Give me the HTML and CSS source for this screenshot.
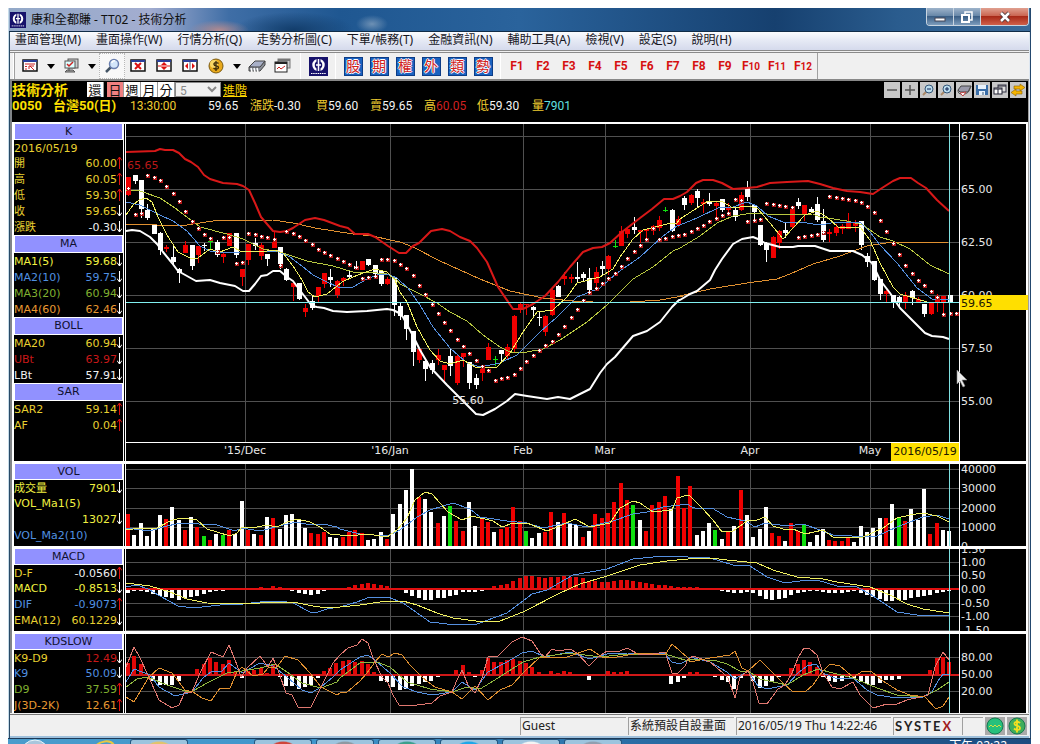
FILE: index.html
```html
<!DOCTYPE html>
<html lang="zh-Hant">
<head>
    <meta charset="UTF-8">
    <meta name="viewport" content="width=device-width, initial-scale=1.0">
    <title>康和全都賺 - TT02 - 技術分析</title>
    <link rel="stylesheet" href="styles.css">
</head>
<body>
    <!-- shared symbols -->
    <svg class="defs" width="0" height="0">
        <symbol id="up" viewBox="0 0 5 13"><path d="M2.5 13V1M0 4.5L2.5 1L5 4.5" fill="none" stroke="#e01010"/></symbol>
        <symbol id="down" viewBox="0 0 5 13"><path d="M2.5 1V12M0 8.5L2.5 12L5 8.5" fill="none" stroke="#fff"/></symbol>
        <symbol id="logo" viewBox="0 0 19 19">
            <rect width="19" height="19" fill="#17126b"/>
            <circle cx="9.500" cy="8" r="5" fill="none" stroke="#fff" stroke-width="2.500"/>
            <path d="M9.500 1V5M9.500 11V15" stroke="#17126b" stroke-width="4"/>
            <path d="M9.500 2V14M7 8h5" stroke="#fff" stroke-width="1.500"/>
            <path d="M2 16.500h15" stroke="#fff" stroke-dasharray="1.500 .7"/>
        </symbol>
        <symbol id="drop" viewBox="0 0 8 5"><path d="M0 0h8L4 5z"/></symbol>
    </svg>

    <div class="window">
        <div class="titlebar">
            <svg class="app_icon"><use href="#logo"/></svg>
            <h1>康和全都賺 - TT02 - 技術分析</h1>
            <div class="win_buttons">
                <button aria-label="最小化"><svg width="14" height="14"><rect x="2" y="8" width="10" height="3" fill="#fff" stroke="#445"/></svg></button>
                <button aria-label="還原"><svg width="14" height="14"><path d="M5 4V2h7v8h-2" fill="none" stroke="#fff" stroke-width="1.500"/><rect x="2" y="5" width="7" height="7" fill="none" stroke="#fff" stroke-width="2"/></svg></button>
                <button class="close" aria-label="關閉"><svg width="14" height="14"><path d="M3 3l8 8M11 3l-8 8" stroke="#433" stroke-width="4"/><path d="M3 3l8 8M11 3l-8 8" stroke="#fff" stroke-width="2.500"/></svg></button>
            </div>
        </div>

        <div class="client">
            <nav class="menubar">
                <button>畫面管理(M)</button>
                <button>畫面操作(W)</button>
                <button>行情分析(Q)</button>
                <button>走勢分析圖(C)</button>
                <button>下單/帳務(T)</button>
                <button>金融資訊(N)</button>
                <button>輔助工具(A)</button>
                <button>檢視(V)</button>
                <button>設定(S)</button>
                <button>說明(H)</button>
            </nav>

            <div class="toolbar">
                <div class="group">
                    <button aria-label="版面"><svg width="16" height="14"><rect x="1" y="1" width="14" height="11" fill="#fff" stroke="#111" stroke-width="1.500"/><path d="M1 2h14" stroke="#2a3f9a" stroke-width="2"/><path d="M3 5h10M3 7.500h2M3 10h2M7 10V7h5M8 7l4 4" stroke="#c22" fill="none"/></svg></button>
                    <button class="drop" aria-label="版面選單"><svg width="8" height="5"><use href="#drop"/></svg></button>
                    <button aria-label="主機"><svg width="16" height="16"><rect x="5" y="1" width="10" height="9" fill="#ccc" stroke="#555"/><rect x="2" y="3" width="10" height="7" fill="#dff" stroke="#555"/><path d="M4 6l2 2 4-4" fill="none" stroke="#c22" stroke-width="1.500"/><path d="M6 10v3M2 14h10l-2-2H4z" stroke="#555" fill="#aaa"/></svg></button>
                    <button class="drop" aria-label="主機選單"><svg width="8" height="5"><use href="#drop"/></svg></button>
                    <button class="on" aria-label="放大鏡"><svg width="16" height="16"><path d="M2 14l5-5" stroke="#456" stroke-width="2.500"/><circle cx="10" cy="6" r="4.500" fill="#d4e6fa" stroke="#6a7fb0" stroke-width="1.500"/><path d="M8 5a2 2 0 0 1 3-2" fill="none" stroke="#fff" stroke-width="1.500"/></svg></button>
                    <button aria-label="關閉視窗"><svg width="16" height="14"><rect x="1" y="1" width="14" height="11" fill="#fff" stroke="#111" stroke-width="1.500"/><path d="M1 2h14" stroke="#2a3f9a" stroke-width="2"/><path d="M5 4l6 6M11 4l-6 6" stroke="#d11" stroke-width="2"/></svg></button>
                    <button aria-label="上下排列"><svg width="16" height="14"><rect x="1" y="1" width="14" height="11" fill="#fff" stroke="#111" stroke-width="1.500"/><path d="M1 2h14" stroke="#2a3f9a" stroke-width="2"/><path d="M2 7h12" stroke="#d11"/><path d="M8 3l3 3H5zM8 11l3-3H5z" fill="#d11"/></svg></button>
                    <button aria-label="左右排列"><svg width="16" height="14"><rect x="1" y="1" width="14" height="11" fill="#fff" stroke="#111" stroke-width="1.500"/><path d="M1 2h14" stroke="#2a3f9a" stroke-width="2"/><path d="M8 3v9" stroke="#556"/><path d="M3 7l3-3v6zM13 7l-3-3v6z" fill="#d11"/></svg></button>
                    <button aria-label="帳務"><svg width="16" height="16"><circle cx="8" cy="8" r="7" fill="#e8a91c" stroke="#7b5a10"/><circle cx="6" cy="6" r="4" fill="#f8d766"/><path d="M10.500 5.500C9 4 5.500 4.500 6 6.500s4.500 1 4.500 3-3.500 2-5 .5M8 3v10" fill="none" stroke="#3b2a08" stroke-width="1.300"/></svg></button>
                    <button class="drop" aria-label="帳務選單"><svg width="8" height="5"><use href="#drop"/></svg></button>
                    <button aria-label="列印"><svg width="18" height="16"><path d="M1 9l6-6h10l-5 7z" fill="#a8b0c8" stroke="#444"/><path d="M1 9h11l5-6v4l-5 6H1z" fill="#8a8f98" stroke="#444"/><path d="M3 10l1 4M6 10l1 4M9 10l1 4" stroke="#fff" stroke-width="1.500"/></svg></button>
                    <button aria-label="走勢圖"><svg width="18" height="16"><rect x="4" y="1" width="12" height="9" fill="#ccc" stroke="#777"/><path d="M4 2h12" stroke="#777" stroke-width="2"/><rect x="1" y="4" width="12" height="10" fill="#fff" stroke="#222"/><path d="M1 5h12" stroke="#222" stroke-width="2"/><path d="M3 11l2-2 2 2 4-3" fill="none" stroke="#c22"/></svg></button>
                </div>
                <div class="group">
                    <button aria-label="康和"><svg width="19" height="19"><use href="#logo"/></svg></button>
                </div>
                <div class="group">
                    <button class="word"><span>股</span></button>
                    <button class="word"><span>期</span></button>
                    <button class="word"><span>權</span></button>
                    <button class="word"><span>外</span></button>
                    <button class="word"><span>類</span></button>
                    <button class="word"><span>勢</span></button>
                </div>
                <div class="group">
                    <button class="fkey">F1</button>
                    <button class="fkey">F2</button>
                    <button class="fkey">F3</button>
                    <button class="fkey">F4</button>
                    <button class="fkey">F5</button>
                    <button class="fkey">F6</button>
                    <button class="fkey">F7</button>
                    <button class="fkey">F8</button>
                    <button class="fkey">F9</button>
                    <button class="fkey">F<small>10</small></button>
                    <button class="fkey">F<small>11</small></button>
                    <button class="fkey">F<small>12</small></button>
                </div>
            </div>

            <div class="workspace">
                <div class="head">
                    <div class="controls">
                        <h2>技術分析</h2>
                        <button class="period reset">還</button>
                        <button class="period on">日</button>
                        <button class="period">週</button>
                        <button class="period">月</button>
                        <button class="period">分</button>
                        <select aria-label="分鐘" disabled><option>5</option></select>
                        <a href="javascript:;">進階</a>
                        <div class="tools">
                            <button aria-label="減少"><svg width="16" height="16"><path d="M3 8h10" stroke="#555" stroke-width="1.500"/></svg></button>
                            <button aria-label="增加"><svg width="16" height="16"><path d="M3 8h10M8 3v10" stroke="#555" stroke-width="1.500"/></svg></button>
                            <button aria-label="縮小"><svg width="16" height="16"><path d="M3 13l4-4" stroke="#a86" stroke-width="2"/><circle cx="9" cy="7" r="4" fill="#bde" stroke="#357"/><path d="M7 7h4" stroke="#125"/></svg></button>
                            <button aria-label="放大"><svg width="16" height="16"><path d="M3 13l4-4" stroke="#a86" stroke-width="2"/><circle cx="9" cy="7" r="4" fill="#bde" stroke="#357"/><path d="M7 7h4M9 5v4" stroke="#125"/></svg></button>
                            <button aria-label="列印"><svg width="16" height="16"><path d="M2 8l3-4h10l-3 6H4z" fill="#99a" stroke="#444"/><path d="M2 8c0 3 1 4 4 4s5 0 7-3l2-5" fill="none" stroke="#555"/><path d="M4 11l3 3 3-4z" fill="#fff" stroke="#b44"/></svg></button>
                            <button aria-label="儲存"><svg width="16" height="16"><path d="M2 3h12v10H2z" fill="#3a6ea8"/><path d="M4 3h8v4H4zM5 9h6v4H5z" fill="#e8f2fc"/><path d="M9 10v3" stroke="#357"/></svg></button>
                            <button aria-label="視窗"><svg width="16" height="16"><rect x="6" y="3" width="8" height="7" fill="#ddd" stroke="#334"/><rect x="2" y="6" width="8" height="6" fill="#fff" stroke="#223"/><path d="M2 7h8M6 7v5M6 4h8" stroke="#223"/></svg></button>
                            <button aria-label="切換"><svg width="16" height="16"><path d="M4 4h6V2l5 3.500L10 9V7H4zM12 9H6V7l-5 3.500L6 14v-2h6z" fill="#f5b400" stroke="#8a6000" stroke-width=".6"/></svg></button>
                        </div>
                    </div>
                    <div class="quote">
                        <b>0050</b>
                        <b>台灣50(日)</b>
                        <span class="time">13:30:00</span>
                        <span>59.65</span>
                        <span><i>漲跌</i>-0.30</span>
                        <span><i>買</i>59.60</span>
                        <span><i>賣</i>59.65</span>
                        <span class="red"><i>高</i>60.05</span>
                        <span><i>低</i>59.30</span>
                        <span class="cyan"><i>量</i>7901</span>
                    </div>
                </div>

                <div class="panel price">
                    <div class="legend">
                        <h3>K</h3>
                        <p class="gold"><span>2016/05/19</span></p>
                        <p class="gold"><span>開</span><em>60.00</em><svg><use href="#up"/></svg></p>
                        <p class="gold"><span>高</span><em>60.05</em><svg><use href="#up"/></svg></p>
                        <p class="gold"><span>低</span><em>59.30</em><svg><use href="#up"/></svg></p>
                        <p class="gold"><span>收</span><em>59.65</em><svg><use href="#down"/></svg></p>
                        <p class="gold"><span>漲跌</span><em class="white">-0.30</em><svg><use href="#down"/></svg></p>
                        <h3>MA</h3>
                        <p class="yellow"><span>MA1(5)</span><em>59.68</em><svg><use href="#down"/></svg></p>
                        <p class="blue"><span>MA2(10)</span><em>59.75</em><svg><use href="#down"/></svg></p>
                        <p class="green"><span>MA3(20)</span><em>60.94</em><svg><use href="#down"/></svg></p>
                        <p class="orange"><span>MA4(60)</span><em>62.46</em><svg><use href="#down"/></svg></p>
                        <h3>BOLL</h3>
                        <p class="gold"><span>MA20</span><em>60.94</em><svg><use href="#down"/></svg></p>
                        <p class="red"><span>UBt</span><em>63.97</em><svg><use href="#down"/></svg></p>
                        <p class="white"><span>LBt</span><em>57.91</em><svg><use href="#down"/></svg></p>
                        <h3>SAR</h3>
                        <p class="gold"><span>SAR2</span><em>59.14</em><svg><use href="#up"/></svg></p>
                        <p class="gold"><span>AF</span><em>0.04</em><svg><use href="#up"/></svg></p>
                    </div>
                    <svg class="plot" id="price"></svg>
                    <svg class="axis" id="price_axis"></svg>
                    <svg class="cursor" viewBox="0 0 12 18"><path d="M1 0v14l3-3 3 6 2-1-3-6h5z" fill="#eee" stroke="#888" stroke-width=".6"/></svg>
                </div>

                <div class="panel volume">
                    <div class="legend">
                        <h3>VOL</h3>
                        <p class="yellow"><span>成交量</span><em>7901</em><svg><use href="#down"/></svg></p>
                        <p class="yellow"><span>VOL_Ma1(5)</span></p>
                        <p class="yellow"><em>13027</em><svg><use href="#down"/></svg></p>
                        <p class="blue"><span>VOL_Ma2(10)</span></p>
                    </div>
                    <svg class="plot" id="volume"></svg>
                    <svg class="axis" id="volume_axis"></svg>
                </div>

                <div class="panel macd">
                    <div class="legend">
                        <h3>MACD</h3>
                        <p class="gold"><span>D-F</span><em class="white">-0.0560</em><svg><use href="#up"/></svg></p>
                        <p class="yellow"><span>MACD</span><em>-0.8513</em><svg><use href="#down"/></svg></p>
                        <p class="blue"><span>DIF</span><em>-0.9073</em><svg><use href="#up"/></svg></p>
                        <p class="gold"><span>EMA(12)</span><em>60.1229</em><svg><use href="#down"/></svg></p>
                    </div>
                    <svg class="plot" id="macd"></svg>
                    <svg class="axis" id="macd_axis"></svg>
                </div>

                <div class="panel kd">
                    <div class="legend">
                        <h3>KDSLOW</h3>
                        <p class="gold"><span>K9-D9</span><em class="red">12.49</em><svg><use href="#down"/></svg></p>
                        <p class="blue"><span>K9</span><em>50.09</em><svg><use href="#down"/></svg></p>
                        <p class="green"><span>D9</span><em>37.59</em><svg><use href="#up"/></svg></p>
                        <p class="orange"><span>J(3D-2K)</span><em>12.61</em><svg><use href="#up"/></svg></p>
                    </div>
                    <svg class="plot" id="kd"></svg>
                    <svg class="axis" id="kd_axis"></svg>
                </div>
            </div>

            <div class="statusbar">
                <span class="user">Guest</span>
                <span class="layout">系統預設自設畫面</span>
                <span class="clock">2016/05/19 Thu 14:22:46</span>
                <span class="brand">SYSTE<i>X</i></span>
                <span class="blank"></span>
                <svg width="20" height="18" viewBox="0 0 20 18"><rect width="20" height="18" fill="#aaa"/><circle cx="10" cy="9" r="8" fill="#27c07c" stroke="#167a50"/><path d="M4 10l2-2 2 2 2-2 2 2 2-2 2 2" fill="none" stroke="#d8e040"/></svg>
                <svg width="20" height="18" viewBox="0 0 20 18"><rect width="20" height="18" fill="#aaa"/><circle cx="10" cy="9" r="8" fill="#3fae5c" stroke="#167a50"/><path d="M13 6C11 4 7 4.500 7.500 7s5.500 1.500 5.500 4-4 2.500-6 .5M10 2.500v13" fill="none" stroke="#f4e020" stroke-width="1.800"/></svg>
            </div>
        </div>
    </div>

    <div class="taskbar">
        <svg class="orb" viewBox="0 0 30 8"><circle cx="15" cy="15" r="14" fill="#a9c6dc" stroke="#e8f4fb"/></svg>
        <svg class="ie" viewBox="0 0 24 8"><path d="M2 8C8 2 18 0 22 6" fill="none" stroke="#e8c840" stroke-width="2"/></svg>
        <span class="task" style="color:#e2c36b"></span>
        <span class="task plain"></span>
        <span class="task" style="color:#d0453a"></span>
        <span class="task" style="color:#8d99a2"></span>
        <span class="task" style="color:#3aa08c"></span>
        <span class="task" style="color:#1ea7e8"></span>
        <span class="task" style="color:#f4f4f4"></span>
        <span class="task" style="color:#8f9fb0"></span>
        <time>下午 02:22</time>
    </div>
    <script src="chart.js"></script>
</body>
</html>
```

FILE: styles.css
```css
* {
    padding: 0;
    margin: 0;
    box-sizing: border-box;
}
body {
    background: #fff;
    font-family: "Noto Sans", "Noto Sans CJK TC", sans-serif;
    font-size: 12px;
    overflow: hidden;
}
button {
    border: 0;
    background: none;
    font: inherit;
    color: inherit;
    display: flex;
    align-items: center;
    justify-content: center;
}
i, em {
    font-style: normal;
}
svg {
    display: block;
}
.defs {
    position: absolute;
}
.window {
    margin: 8px 9px 0 8px;
    background: #b9d3ea;
    border-left: 1px solid #c6dcea;
    border-right: 1px solid #23486e;
}

/* title bar */
.titlebar {
    display: flex;
    align-items: center;
    height: 24px;
    color: #111;
    background:
        radial-gradient(ellipse 30px 10px at 210px 22px, #b08a90, transparent),
        radial-gradient(ellipse 16px 9px at 363px 16px, #6d90b4, transparent),
        radial-gradient(ellipse 60px 18px at 285px 22px, #123d6b, transparent),
        linear-gradient(to right, #93a9c8 0, #a3add0 140px, #3f6ea6 220px, #1f5791 330px, #2a639c 50%, #16406f 75%, #2a5c8e 87%, #3a6a99 100%);
    border-bottom: 1px solid #102c48;
}
.app_icon {
    width: 16px;
    height: 16px;
    margin-left: 1px;
}
.titlebar h1 {
    margin-left: 5px;
    font-size: 12px;
    font-weight: normal;
    line-height: 20px;
}
.win_buttons {
    display: flex;
    align-self: flex-start;
    margin-left: auto;
    margin-right: 1px;
    height: 18px;
    border: 1px solid #c8d4e0;
    border-top: 0;
    border-radius: 0 0 4px 4px;
    overflow: hidden;
}
.win_buttons button {
    width: 27px;
    background: linear-gradient(#9db3ca, #6383a5 50%, #3b5f86 50%, #7c9cbc);
    border-right: 1px solid #c8d4e0;
}
.win_buttons .close {
    width: 47px;
    border-right: 0;
    background: linear-gradient(#e0a090, #c8604c 50%, #a82a18 50%, #d0604a);
}

/* menu and toolbar */
.client {
    border-left: 1px solid #2a4a66;
    border-right: 1px solid #dde6f0;
    background: #f0f0f0;
}
.menubar {
    display: flex;
    gap: 15px;
    height: 18px;
    padding-left: 5px;
    background: linear-gradient(#fbfcfe, #e6eaf5 45%, #d5daec);
    color: #16161e;
}
.menubar button {
    align-items: flex-start;
    line-height: 15px;
    white-space: nowrap;
}
.toolbar {
    display: flex;
    height: 29px;
    border-top: 3px double #8a8a8a;
    padding-left: 4px;
}
.toolbar .group {
    display: flex;
    padding: 0 4px;
    border-right: 1px solid #a0a0a0;
    box-shadow: -1px 0 #fff;
}
.toolbar .group:first-child {
    padding-left: 2px;
    border-left: 1px solid #a0a0a0;
}
.toolbar .group:last-child {
    padding: 0 1px 0 3px;
}
.toolbar button {
    width: 26px;
}
.toolbar .drop {
    width: 15px;
}
.toolbar .on {
    background: #f8f8f8;
    border: 1px dotted #b8b8b8;
}
.word span {
    width: 19px;
    height: 19px;
    background: #1a62c0;
    border: 1px solid #0c3c86;
    color: #d02020;
    font-size: 14px;
    line-height: 16px;
    text-shadow: 1px 0 #fff, -1px 0 #fff, 0 1px #fff, 0 -1px #fff;
}
.fkey {
    color: #d61010;
    font-family: Roboto, sans-serif;
    font-weight: bold;
}
.fkey small {
    font-size: 10px;
}

/* black work area */
.workspace {
    border-left: 2px solid #808488;
    border-right: 1px solid #a0a0a0;
    border-top: 2px solid #888;
    background: #fff;
}
.head {
    height: 41px;
    background: #000;
    color: #f4f4f4;
}
.controls {
    display: flex;
    height: 17px;
    padding-top: 1px;
}
.controls h2 {
    width: 75px;
    color: #ffe000;
    font-size: 14px;
    line-height: 15px;
}
.period {
    width: 17px;
    height: 15px;
    background: #fff;
    border-right: 1px solid #999;
    color: #111;
    font-size: 13px;
    line-height: 14px;
}
.period.reset {
    margin-right: 3px;
}
.period.on {
    background: #f08080;
}
.controls select {
    width: 46px;
    height: 15px;
    padding: 0;
    border: 1px solid #888;
    background: #f0f0f0;
    color: #888;
    font: 12px Roboto, sans-serif;
    opacity: 1;
}
.controls a {
    margin-left: 2px;
    color: #ffd800;
    line-height: 17px;
}
.tools {
    display: flex;
    gap: 2px;
    margin-left: auto;
    margin-right: 2px;
}
.tools button {
    width: 16px;
    height: 16px;
    background: #c8c8c8;
}
.quote {
    display: grid;
    grid-template-columns: 41px 77px 78px 42px 66px 54px 54px 53px 55px auto;
    font-family: Roboto, "Noto Sans CJK TC", sans-serif;
    line-height: 16px;
    white-space: nowrap;
}
.quote b {
    color: #ffe000;
    font-size: 13px;
}
.quote i, .quote .time {
    color: #f0cc30;
}
.quote .red {
    color: #d02020;
}
.quote .cyan {
    color: #60e0e0;
}

/* panels */
.panel {
    display: grid;
    grid-template-columns: 110px 1fr 67px;
    position: relative;
    margin: 0 2px 0 0;
    border-left: 2px solid #fff;
    border-right: 0;
    background: #000;
    border-top: 3px solid #fff;
    box-sizing: content-box;
    margin-right: 2px;
    font: 11px "DejaVu Sans", "Noto Sans CJK TC", sans-serif;
}
.price {
    height: 337px;
    border-top-width: 2px;
}
.volume, .macd {
    height: 82px;
}
.kd {
    height: 79px;
}
.legend {
    border-right: 1px solid #fff;
    overflow: hidden;
}
.legend h3 {
    height: 18px;
    border: 1px solid #fff;
    background: #9191ff;
    color: #101030;
    font-size: 11px;
    font-weight: normal;
    line-height: 16px;
    text-align: center;
}
.legend h3:first-child {
    height: 16px;
    border-top: 0;
}
.legend h3:first-child + p {
    height: 15px;
}
.legend p {
    display: flex;
    height: 16px;
    line-height: 17px;
    white-space: nowrap;
}
.legend em {
    margin-left: auto;
}
.legend svg {
    width: 5px;
    height: 13px;
    margin: 1px 1px 0 0;
    overflow: visible;
}
.gold { color: #e8d030; }
.yellow { color: #f0f040; }
.blue { color: #5090e0; }
.green { color: #80b030; }
.orange { color: #e89830; }
.red { color: #c81818; }
.white { color: #f0f0f0; }

.plot {
    width: calc(100% - 1px);
    height: 100%;
    margin-left: 1px;
    border-left: 1px solid #fff;
}
.axis {
    width: 67px;
    height: 100%;
    border-left: 1px solid #fff;
}
.price .axis {
    overflow: visible;
}
.plot text, .axis text {
    fill: #e8e8e8;
}
.plot .high {
    fill: #b81818;
}
.plot .today, .axis .today {
    fill: #201800;
}
.cursor {
    position: absolute;
    right: 58px;
    top: 246px;
    width: 12px;
    height: 18px;
}

/* status bar */
.statusbar {
    display: flex;
    justify-content: flex-end;
    gap: 2px;
    height: 24px;
    margin-top: 1px;
    padding: 2px 2px 3px 0;
    border-top: 1px solid #777;
    border-bottom: 2px solid #9ec0dc;
    color: #222;
}
.statusbar span {
    height: 18px;
    padding-left: 1px;
    border-left: 1px solid #a0a0a0;
    border-top: 1px solid #a0a0a0;
    line-height: 15px;
    white-space: nowrap;
    overflow: hidden;
}
.statusbar .user {
    width: 106px;
}
.statusbar .layout {
    width: 106px;
}
.statusbar .clock {
    width: 155px;
}
.statusbar .brand {
    width: 67px;
    font: bold 13px/16px Lato, sans-serif;
    letter-spacing: 2px;
}
.brand i {
    color: #a02020;
}
.statusbar .blank {
    width: 21px;
}

/* taskbar */
.taskbar {
    display: flex;
    height: 7px;
    margin-right: 9px;
    margin-left: 8px;
    padding-left: 12px;
    overflow: hidden;
    border-top: 1px solid #1d3a58;
    background: linear-gradient(to right, #4a9ccc, #3f96cc 30%, #2a6ea6 60%, #1c4c80);
}
.orb {
    width: 30px;
    height: 8px;
}
.ie {
    width: 24px;
    height: 8px;
    margin: 0 14px 0 42px;
}
.task {
    width: 58px;
    height: 8px;
    margin-right: 4px;
    border: 1px solid #24567f;
    border-bottom: 0;
    border-radius: 3px 3px 0 0;
    background: radial-gradient(ellipse 12px 6px at 50% 100%, currentColor 80%, transparent), #9cc4de;
}
.task.plain {
    border-color: transparent;
    background: none;
}
.taskbar time {
    margin-left: auto;
    margin-right: 24px;
    color: #fff;
    line-height: 13px;
}
```

FILE: chart.js
```js
// Positions are kept in thirds of a pixel, three units to one screen pixel.
// Each line is stored as [start, points] pieces that are joined together.
var FIRST = 24;
var STEP = 18.95;
var LEFT = 18;
var BASE_WIDTH = 833;
var MONTHS = [376, 811, 1210, 1456, 1891, 2251];
var CROSS = 2488;

var YELLOW = "#f0f060", BLUE = "#5590e0", ORANGE = "#e09030", OLIVE = "#b8c840", GREEN = "#90b840", PINK = "#e07870";
var fills = { r: "#f00000", w: "#ffffff", g: "#10e010" };

// high, body top, body bottom, low
var candles = (
    "r171,171,225,228 w165,165,182,192 w180,180,267,293 w252,269,294,299 w315,315,342,342 w336,339,390,404 r375,380,386,396 w372,410,427,435 w444,446,458,488 r364,375,399,399 " +
    "w375,375,437,449 r378,378,405,428 w369,374,378,392 g360,362,362,388 w361,366,404,410 r396,401,411,430 r340,340,379,379 w339,339,404,413 r447,447,471,497 r372,372,420,434 " +
    "w354,369,379,391 r370,375,408,419 w402,402,416,437 r335,365,383,383 w381,381,431,447 w443,446,480,483 r488,489,500,542 w489,489,536,539 r551,563,576,591 w528,543,563,570 " +
    "r501,501,529,545 r459,459,492,503 w447,471,481,500 r480,483,525,533 r472,475,483,497 w451,466,470,473 w423,437,448,449 r423,423,449,449 w417,417,434,438 w435,435,462,474 " +
    "w451,454,491,497 r470,476,491,494 w470,474,554,587 w546,558,588,600 w585,585,627,660 w632,632,695,738 r685,686,720,728 w715,723,747,783 w720,729,751,762 r687,705,719,735 " +
    "r735,735,750,786 w687,708,738,768 r702,708,789,795 r699,699,711,741 w726,726,789,807 w762,774,795,807 r740,747,759,783 r670,681,720,720 g708,718,718,738 w690,690,702,722 " +
    "r672,681,708,717 r585,588,687,699 r549,553,567,578 r552,552,556,585 w558,561,570,588 w576,591,594,617 r585,588,636,648 r507,510,585,588 w495,498,530,531 r456,468,477,495 " +
    "r462,470,476,488 w426,472,476,488 w456,462,473,485 w444,474,510,519 r441,456,489,503 w423,438,446,467 r405,408,447,465 g360,377,377,384 r318,333,377,378 r321,327,342,353 " +
    "w291,321,330,342 r330,331,335,370 r327,328,334,357 r315,318,332,345 r288,300,324,333 g260,271,271,276 w267,270,333,336 r288,298,315,321 w228,234,254,270 r221,225,249,255 " +
    "w207,213,234,260 r237,247,251,280 w219,246,251,258 r243,249,258,292 w237,237,270,275 r250,263,270,279 w264,269,292,303 r216,225,270,273 w183,204,231,243 w252,255,276,296 " +
    "w315,315,375,378 w365,369,390,426 r348,351,413,414 r330,333,369,388 w309,330,339,354 r261,267,321,324 w234,246,258,266 r255,255,285,302 w261,267,276,279 w230,252,300,306 " +
    "w267,303,360,366 r327,336,343,366 r312,321,339,348 r313,318,326,342 r279,303,326,327 r300,309,317,335 w303,303,375,390 w399,408,426,440 w423,423,480,483 w477,477,522,540 " +
    "r509,514,521,546 w525,525,546,564 w528,531,546,557 r516,525,546,567 w510,513,534,554 r531,536,545,548 w552,552,582,591 r546,549,582,585 r522,528,549,576 r528,528,546,583 w525,525,546,546"
).split(" ");

var sar = [
    203, 283, 280, 166, 172, 181, 199, 220, 244, 274, 304, 325, 343, 355, 393, 352, 352, 430, 427, 340,
    343, 349, 352, 358, 435, 334, 340, 349, 361, 373, 388, 397, 406, 415, 424, 433, 441, 475, 472, 467,
    418, 418, 421, 433, 445, 466, 494, 523, 553, 580, 607, 631, 658, 679, 700, 721, 739, 751, 781, 775,
    772, 763, 745, 724, 706, 691, 676, 664, 643, 619, 592, 568, 541, 517, 503, 490, 475, 460, 439, 415,
    394, 374, 358, 325, 358, 355, 349, 346, 343, 334, 325, 316, 304, 295, 286, 280, 238, 241, 304, 300,
    297, 250, 253, 256, 259, 262, 352, 349, 346, 343, 336, 229, 232, 235, 238, 241, 247, 259, 277, 301,
    334, 370, 403, 436, 460, 481, 496, 514, 530, 583, 580, 580
];

var priceLines = [
    { color: ORANGE, parts: [
        [0, "18,313 110,316 200,316 280,302 460,301 520,309 585,325 660,337 700,341 760,347 810,361"],
        [840, "0,367 40,380 120,423 240,478 330,512 430,533 520,543 640,548 690,546 780,541 850,528"],
        [1680, "0,527 90,507 200,488 290,477 330,463 400,432 480,407 560,378 640,367 805,367"]] },
    { color: OLIVE, parts: [
        [0, "18,211 60,213 120,233 165,265 200,292 240,320 320,342 370,356 430,386 480,396 560,424 640,438 700,455 740,457 800,463 830,480"],
        [840, "0,493 60,523 110,548 150,575 200,603 250,645 300,680 330,695 380,695 430,686 480,660 560,605 620,555 700,478 760,440 820,393"],
        [1680, "0,383 60,348 110,308 160,288 220,278 300,286 400,282 420,291 500,302 550,315 600,350 640,363 690,388 750,435 807,463"]] },
    { color: BLUE, parts: [
        [0, "18,247 60,256 120,285 160,303 200,333 240,377 270,394 305,398 360,396 470,392 510,412 545,438 580,465 620,485 655,500 700,500 740,478 770,465 800,463 830,475"],
        [840, "0,483 25,505 60,555 100,620 150,685 200,728 240,741 300,730 350,705 420,635 470,590 530,530 600,505 650,460 720,410 790,348 830,318"],
        [1680, "0,315 50,295 120,262 160,262 200,246 230,258 265,287 310,307 360,307 420,314 470,305 540,307 570,335 600,375 650,430 710,503 755,538 807,539"]] },
    { color: YELLOW, parts: [
        [0, "18,285 40,255 58,240 78,233 96,247 115,290 140,345 175,395 210,415 235,413 270,388 300,395 340,380 365,395 440,392 465,390 490,400 520,437 545,480 565,515 585,531 620,522 665,485 700,470 730,460 765,448 800,456 825,480"],
        [840, "0,515 20,545 50,622 90,690 120,722 150,732 190,720 230,745 290,742 330,700 370,635 410,575 460,570 500,530 530,490 600,472 640,448 660,410 700,358 730,330 800,312 830,309"],
        [1680, "0,298 50,265 85,242 130,245 160,263 200,258 230,265 270,310 310,357 340,325 375,285 410,273 440,292 475,322 510,324 540,322 570,360 600,430 640,500 660,522 740,545 807,546"]] },
    { color: "#d81818", width: 2, parts: [
        [0, "18,95 105,93 120,87 135,90 160,90 177,98 195,116 213,125 234,141 252,166 270,178 309,190 350,192 370,198 386,210 404,250 422,290 440,312 460,333 480,337 500,333 520,325 555,300 585,294 612,300 660,318 685,324 706,341 745,343 765,352 805,378 838,398"],
        [840, "18,398 40,378 58,368 76,350 94,333 127,328 150,333 180,350 210,362 230,385 260,425 295,500 340,568 370,568 400,552 436,528 475,485 510,440 550,397 580,384 605,380 630,370 665,335 720,295 755,268 792,238 820,238"],
        [1680, "0,228 20,215 48,188 70,179 98,179 125,188 160,206 200,203 230,200 270,188 320,185 385,183 420,193 460,204 500,213 540,217 578,222 605,205 640,182 660,174 692,174 715,190 738,203 770,240 807,274"]] },
    { color: "#ffffff", width: 2, parts: [
        [0, "18,332 36,329 60,334 90,350 112,373 130,396 157,428 175,453 200,469 228,483 270,480 300,489 345,497 370,513 386,512 405,492 422,469 440,465 458,453 480,453 500,470 520,484 545,520 575,558 592,562 612,565 640,573 680,576 740,573 800,566 820,569 838,580"],
        [840, "10,592 37,642 60,690 90,740 140,795 185,840 228,882 250,884 285,868 320,842 345,821 380,827 440,836 475,832 510,836 540,822 570,808 600,758 620,732 645,712 680,668 700,647 740,632 780,607 815,560 838,540"],
        [1680, "0,539 30,523 50,512 90,480 105,450 125,418 160,373 185,356 220,351 235,357 255,370 300,382 340,382 355,378 405,378 450,392 520,393 545,405 575,430 600,480 630,520 660,565 690,595 735,638 755,648 790,651 807,657"]] }
];

var volumes = (
    "r222 w285 w249 w288 w264 w225 r237 w201 w240 r270 w231 r261 g288 r300 w282 g285 r270 w282 w183 r270 w282 r285 w231 r234 w267 w225 w222 w240 w264 r279 r282 r276 w291 w294 r291 " +
    "r276 r270 r279 w300 w297 w276 r297 w222 w192 w150 w87 r171 w177 w216 r249 w228 g198 r243 r273 w186 w258 r237 r246 w276 r267 r261 r201 r243 g273 w294 w279 r276 r216 w246 r219 " +
    "w252 w255 r291 w273 r222 r234 r219 r186 r129 r180 g195 w240 r273 r195 r186 r168 w207 r108 r204 r138 w285 w273 w249 g270 w297 r276 w258 r150 w225 w291 w267 w201 r279 r288 w303 " +
    "r249 r273 g252 w306 w285 w267 r300 r303 r303 r291 w306 w258 w276 w264 w234 r234 w192 g234 r243 w207 w240 w147 r282 r249 w270 w273"
).split(" ");

var volumeLines = [
    { color: BLUE, parts: [
        [0, "18,265 90,272 130,260 180,250 290,255 345,272 365,265 420,272 490,255 530,245 570,255 610,252 650,262"],
        [660, "0,267 60,282 140,287 180,270 230,230 270,210 340,190 390,207 420,230 500,243 560,250 610,263 680,250 740,262 820,243 880,222 920,217 970,200 1045,193"],
        [1710, "0,197 20,207 65,203 110,232 165,243 195,260 225,250 290,257 340,252 400,272 430,285 470,285 500,290 560,288 620,262 700,232 740,226 777,238"]] },
    { color: YELLOW, parts: [
        [0, "18,270 60,265 110,265 150,243 180,235 230,241 260,268 290,277 330,287 350,280 365,260 410,262 440,255 470,262 500,245 530,238 570,245 600,262 630,282 690,287"],
        [660, "80,283 140,290 170,270 200,235 225,180 255,157 275,162 300,190 325,215 365,240 395,228 460,242 485,260 520,250 560,250 620,272 660,258 705,238 750,262 810,250 840,205 880,184 900,188 940,216 995,210 1012,175 1045,166"],
        [1710, "0,168 20,190 40,208 70,240 95,277 130,272 170,243 200,240 225,232 250,258 280,268 310,268 345,282 400,270 430,290 480,295 520,290 580,265 620,235 660,225 700,218 740,228 777,245"]] }
];

var macdBars = [
    459, 453, 453, 456, 462, 467, 471, 474, 479, 474, 471, 468, 462, 457, 453, 452, 447, 447, 447, 447,
    447, 441, 447, 438, 442, 447, 452, 459, 462, 465, 461, 452, 447, 447, 447, 441, 435, 433, 429, 432,
    435, 438, 447, 447, 459, 467, 474, 479, 480, 474, 474, 467, 465, 457, 456, 456, 453, 447, 438, 436,
    433, 423, 414, 408, 408, 411, 414, 411, 411, 408, 410, 411, 414, 423, 424, 427, 426, 423, 420, 420,
    423, 427, 429, 432, 435, 435, 438, 441, 441, 441, 441, 444, 447, 447, 453, 456, 459, 459, 456, 459,
    468, 476, 480, 477, 473, 464, 459, 456, 453, 453, 456, 459, 458, 459, 457, 454, 459, 465, 472, 477,
    482, 482, 480, 480, 473, 471, 467, 464, 458, 455, 452
];

var macdLines = [
    { color: BLUE, parts: [
        [0, "18,440 50,436 85,446 120,468 175,498 220,505 300,495 370,492 420,485 480,482 520,490 570,517 595,517 620,508"],
        [660, "0,500 50,487 90,472 145,471 190,490 270,545 320,553 410,552 500,518 575,462 620,450 700,405 800,388 880,356 970,349 1045,350"],
        [1710, "0,350 60,353 130,374 180,378 230,412 285,430 330,422 380,420 440,439 500,441 540,462 620,515 700,529 777,524"]] },
    { color: YELLOW, parts: [
        [0, "18,430 90,437 150,456 200,477 260,489 370,493 470,487 520,487 580,498 620,505"],
        [660, "0,502 60,495 140,482 190,483 230,495 290,518 340,533 430,546 480,543 550,515 660,460 720,432 800,408 900,376 980,363 1045,356"],
        [1710, "0,354 60,354 110,360 200,370 250,390 320,412 400,418 440,426 540,440 600,465 650,492 700,508 777,518"]] }
];

var kdBars = [
    669, 648, 672, 702, 723, 734, 734, 735, 724, 702, 702, 687, 672, 654, 666, 672, 660, 696, 713, 693,
    690, 684, 698, 675, 710, 737, 737, 746, 740, 734, 713, 693, 684, 669, 663, 660, 666, 663, 672, 696,
    722, 727, 740, 749, 746, 738, 731, 725, 723, 710, 707, 702, 690, 675, 696, 710, 690, 654, 666, 666,
    660, 657, 663, 669, 681, 696, 702, 693, 699, 693, 696, 702, 707, 719, 707, 702, 693, 696, 696, 693,
    702, 702, 702, 702, 702, 702, 731, 725, 713, 696, 696, 702, 707, 710, 719, 725, 746, 713, 702, 722,
    743, 737, 722, 710, 702, 684, 672, 660, 666, 681, 710, 722, 726, 722, 710, 713, 725, 732, 735, 728,
    719, 719, 716, 707, 702, 702, 702, 690, 654, 652, 666
];

var kdLines = [
    { color: BLUE, parts: [
        [0, "18,725 43,688 90,705 118,742 165,767 215,755 250,715 272,697 305,692 328,668 365,700 420,670 460,678 500,712 545,750 573,760 603,742 640,710"],
        [660, "0,690 60,652 85,645 110,665 150,700 190,740 230,755 275,766 335,757 367,727 405,750 445,695 500,665 545,638 575,633 615,650 690,635 750,658 800,642 860,638 975,643 995,665 1020,673 1045,660"],
        [1710, "0,650 60,665 110,695 135,718 175,693 205,738 230,748 290,735 325,700 350,678 378,673 400,700 440,718 490,715 530,750 560,765 620,775 700,770 725,755 745,722 760,702 777,702"]] },
    { color: GREEN, parts: [
        [0, "18,740 50,718 85,710 140,735 195,752 220,752 260,728 320,700 365,693 420,683 465,673 500,695 545,730 603,743 650,725"],
        [660, "0,715 60,670 110,665 150,680 200,725 270,748 335,757 380,742 420,747 450,730 550,665 600,650 690,638 780,650 860,642 975,643 1045,662"],
        [1710, "0,657 80,662 110,672 150,692 175,692 210,718 290,735 340,705 385,688 430,700 490,715 560,745 620,765 700,770 740,750 777,727"]] },
    { color: PINK, parts: [
        [0, "18,680 43,622 60,655 85,705 118,780 157,804 177,795 195,755 215,757 240,700 272,637 308,652 328,615 350,675 363,712 380,685 420,648 445,680 460,655 475,690 497,760 515,765 535,800 573,800 603,740 640,670"],
        [660, "0,645 25,623 50,615 66,598 85,608 100,655 125,710 145,730 160,765 178,795 210,799 275,790 300,768 335,755 350,720 367,690 385,735 405,760 425,715 445,652 475,648 515,605 545,591 575,603 600,640 615,650 635,628 655,633 690,628 710,640 748,678 775,650 800,633 840,633 862,625 900,645 940,643 975,635 995,700 1012,703 1035,678 1045,657"],
        [1710, "0,655 10,647 60,665 100,700 115,715 135,775 150,712 175,693 190,725 208,790 230,793 265,748 285,735 305,700 325,655 343,625 360,628 380,645 400,700 425,740 450,748 490,727 510,765 550,804 590,792 620,792 650,780 690,770 715,765 735,680 758,637 777,660"]] },
    { color: ORANGE, parts: [
        [0, "18,770 42,787 88,710 118,685 155,700 195,750 220,755 245,775 272,784 300,745 330,743 350,695 365,680 400,707 430,703 445,683 470,680 495,647 535,660 570,700 603,742 650,765"],
        [660, "0,760 20,757 60,722 80,700 105,665 125,643 145,650 165,640 185,645 210,675 250,715 285,740 335,755 367,778 405,738 445,780 480,750 515,735 550,700 600,650 680,652 750,628 785,652 830,650 900,640 975,645 995,613 1045,655"],
        [1710, "0,667 60,655 120,645 135,633 155,685 175,692 210,660 240,690 285,735 305,752 345,757 370,735 395,695 420,672 450,678 490,710 520,693 545,695 580,722 620,750 660,765 705,770 738,808 760,798 777,770"]] }
];

function Chart(id, top, bottom) {
    this.svg = document.getElementById(id);
    this.axis = document.getElementById(id + "_axis");
    this.top = top;
    this.bottom = bottom;
    this.k = (this.svg.getBoundingClientRect().width - 1) / BASE_WIDTH;
    this.out = [];
    this.labels = [];
}
Chart.prototype.x = function(v) {
    return Math.round((v - LEFT) / 3 * this.k);
};
Chart.prototype.y = function(v) {
    return Math.round((v - this.top) / 3);
};
Chart.prototype.rect = function(x, y, w, h, fill) {
    this.out.push('<rect x="' + x + '" y="' + y + '" width="' + w + '" height="' + h + '" fill="' + fill + '"/>');
};
Chart.prototype.grid = function(rows) {
    var height = this.y(this.bottom);
    for (var i = 0; i < MONTHS.length; i++) {
        this.rect(this.x(MONTHS[i]), 0, 1, height, "#505050");
    }
    for (var j = 0; j < rows.length; j++) {
        this.rect(0, this.y(rows[j]), "100%", 1, "#505050");
    }
};
Chart.prototype.bars = function(list, base) {
    for (var i = 0; i < list.length; i++) {
        var end = list[i];
        if (end === base) continue;
        var x = this.x(FIRST + i * STEP) - 2;
        var a = this.y(Math.min(end, base)), b = this.y(Math.max(end, base));
        this.rect(x, a, 4, b - a, end < base ? "#e00808" : "#fff");
    }
};
Chart.prototype.lines = function(list) {
    for (var i = 0; i < list.length; i++) {
        var pts = [];
        for (var j = 0; j < list[i].parts.length; j++) {
            var part = list[i].parts[j];
            part[1].split(" ").forEach(function(p) {
                var xy = p.split(",");
                pts.push(this.x(part[0] + Number(xy[0])) + "," + this.y(Number(xy[1])));
            }, this);
        }
        var width = list[i].width || 1;
        var edges = width > 1 ? "auto" : "crispEdges";
        this.out.push('<polyline fill="none" stroke-linejoin="round" shape-rendering="' + edges + '" stroke="' + list[i].color + '" stroke-width="' + width + '" points="' + pts.join(" ") + '"/>');
    }
};
Chart.prototype.text = function(x, y, str, cls, anchor) {
    this.out.push('<text x="' + x + '" y="' + y + '" class="' + (cls || "") + '" text-anchor="' + (anchor || "middle") + '">' + str + '</text>');
};
Chart.prototype.label = function(y, str) {
    this.labels.push('<text x="1" y="' + (this.y(y) + 4) + '">' + str + '</text>');
};
Chart.prototype.cross = function() {
    this.rect(this.x(CROSS), 0, 1, this.y(this.bottom), "#80e0e0");
};
Chart.prototype.draw = function() {
    this.svg.innerHTML = this.out.join("");
    this.axis.innerHTML = this.labels.join("");
};

function drawPrice() {
    var c = new Chart("price", 12, 966);
    var rows = [49, 208, 367, 526, 685, 844];
    var names = ["67.50", "65.00", "62.50", "60.00", "57.50", "55.00"];
    c.grid(rows);
    for (var i = 0; i < candles.length; i++) {
        var kind = candles[i].charAt(0);
        var v = candles[i].slice(1).split(",").map(function(n) { return c.y(Number(n)); });
        var x = c.x(FIRST + 1 + i * STEP);
        c.rect(x, v[0], 1, Math.max(1, v[3] - v[0]), fills[kind]);
        c.rect(x - 2, v[1], 5, Math.max(1, v[2] - v[1]), fills[kind]);
    }
    c.lines(priceLines);
    for (var s = 0; s < sar.length; s++) {
        var sx = c.x(FIRST + 1 + s * STEP), sy = c.y(sar[s]);
        c.rect(sx - 1, sy - 1, 4, 4, "#b01818");
        c.rect(sx - 1, sy, 3, 1, "#fff");
        c.rect(sx, sy - 1, 1, 3, "#fff");
    }
    c.rect(0, c.y(547), "100%", 1, "#80f0f0");
    c.cross();
    c.rect(0, c.y(966), "100%", 1, "#fff");
    c.text(1, 45, "65.65", "high", "start");
    c.text(c.x(1044), 280, "55.60");
    ["'15/Dec", "'16/Jan", "Feb", "Mar", "Apr", "May"].forEach(function(m, n) {
        c.text(c.x(MONTHS[n]), 330, m);
    });
    var end = Math.round(BASE_WIDTH * c.k);
    c.rect(end - 68, 319, 68, 18, "#ffdf00");
    c.text(end - 34, 331, "2016/05/19", "today");
    for (var j = 0; j < rows.length; j++) {
        c.label(rows[j], names[j]);
    }
    c.labels.push('<rect x="0" y="171" width="68" height="15" fill="#ffdf00"/><text class="today" x="1" y="183">59.65</text>');
    c.draw();
}

function drawVolume() {
    var c = new Chart("volume", 72, 318);
    var rows = [88, 145, 205, 262];
    c.grid(rows);
    for (var i = 0; i < volumes.length; i++) {
        var y = c.y(Number(volumes[i].slice(1)));
        c.rect(c.x(FIRST + i * STEP) - 2, y, 4, 82 - y, fills[volumes[i].charAt(0)]);
    }
    c.lines(volumeLines);
    c.cross();
    for (var j = 0; j < rows.length; j++) {
        c.label(rows[j], (4 - j) + "0000");
    }
    c.label(318, "0");
    c.draw();
}

function drawMacd() {
    var c = new Chart("macd", 327, 573);
    c.grid([367, 406, 490, 529, 571]);
    c.bars(macdBars, 447);
    c.rect(0, c.y(444), "100%", 2, "#e01010");
    c.lines(macdLines);
    c.cross();
    [327, 367, 406, 447, 490, 529, 571].forEach(function(y, n) {
        c.label(y, (1.5 - n / 2).toFixed(2));
    });
    c.draw();
}

function drawKd() {
    var c = new Chart("kd", 582, 819);
    c.grid([652, 754]);
    c.bars(kdBars, 702);
    c.rect(0, c.y(701), "100%", 2, "#d01818");
    c.lines(kdLines);
    c.cross();
    c.label(652, "80.00");
    c.label(702, "50.00");
    c.label(754, "20.00");
    c.draw();
}

function drawAll() {
    drawPrice();
    drawVolume();
    drawMacd();
    drawKd();
}
drawAll();
window.onresize = drawAll;
```
